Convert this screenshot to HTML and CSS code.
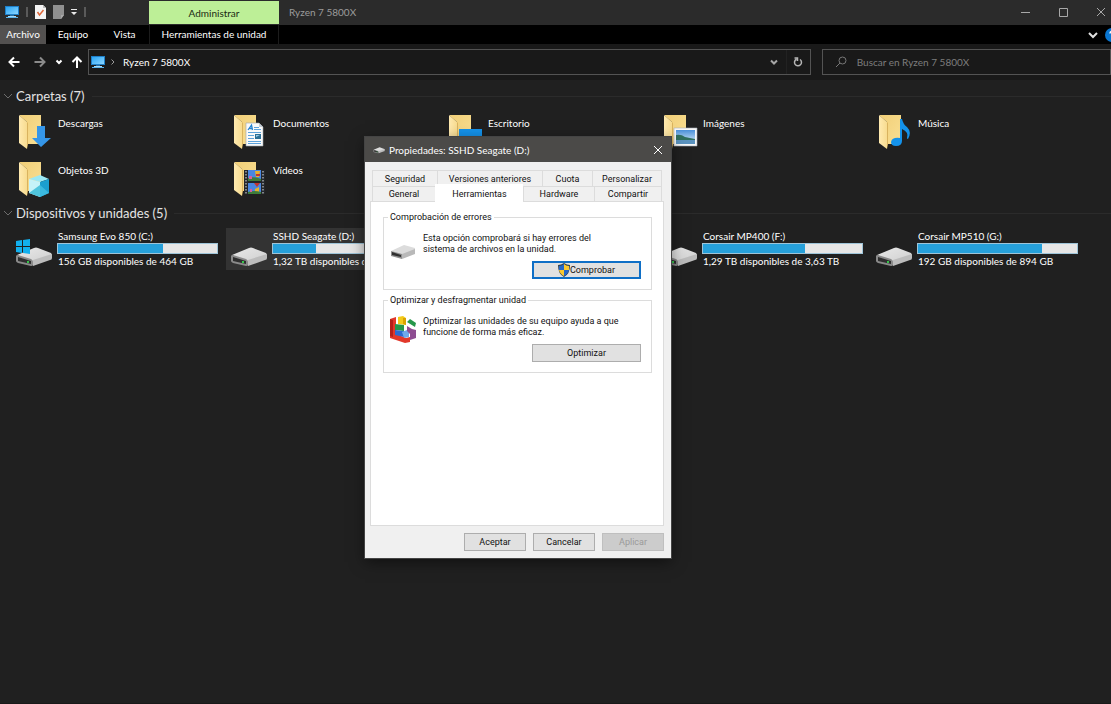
FILE: index.html
```html
<!DOCTYPE html>
<html lang="es">
<head>
    <meta charset="UTF-8">
    <meta name="viewport" content="width=device-width, initial-scale=1.0">
    <title>Ryzen 7 5800X</title>
    <link rel="stylesheet" href="styles.css">
</head>
<body>
    <!-- Shared icons -->
    <svg class="sprite" aria-hidden="true">
        <defs>
            <linearGradient id="gFolder" x1="0" y1="0" x2="1" y2="1">
                <stop offset="0" stop-color="#f1cf78"/>
                <stop offset="1" stop-color="#f9df93"/>
            </linearGradient>
            <linearGradient id="gFlap" x1="0" y1="0" x2="1" y2="0">
                <stop offset="0" stop-color="#ffeab0"/>
                <stop offset="1" stop-color="#f8dc90"/>
            </linearGradient>
            <linearGradient id="gScreen" x1="0" y1="0" x2="1" y2="1">
                <stop offset="0" stop-color="#2aa5f5"/>
                <stop offset="1" stop-color="#8ad5ff"/>
            </linearGradient>
            <linearGradient id="gTop" x1="0" y1="0" x2="1" y2="1">
                <stop offset="0" stop-color="#e9e9e9"/>
                <stop offset="1" stop-color="#cfcfcf"/>
            </linearGradient>
            <linearGradient id="gSky" x1="0" y1="0" x2="0" y2="1">
                <stop offset="0" stop-color="#4a90d9"/>
                <stop offset="1" stop-color="#e4f3fb"/>
            </linearGradient>
        </defs>
        <symbol id="pc" viewBox="0 0 14 14">
            <path fill="#1f7fc8" d="M0 1h14v9H0z"/>
            <path fill="url(#gScreen)" d="M1 2h12v7H1z"/>
            <path fill="#2a6d9e" d="M5 10h4v2H5z"/>
            <path fill="#5cb4ec" d="M1 12h12v1H1z"/>
            <path fill="#a5dcfa" d="M3 11h8v1H3z"/>
        </symbol>
        <symbol id="folder" viewBox="0 0 38 38">
            <path fill="url(#gFolder)" d="M5 1h21v29H12V8L5 2z"/>
            <path fill="#d9b35f" d="M12 9l1-1v22l-1 5z"/>
            <path fill="url(#gFlap)" d="M4 1l8 7v27l-8-6z"/>
        </symbol>
        <symbol id="drive" viewBox="0 0 38 22">
            <path fill="url(#gTop)" d="M2 10L19 3q2-1 4 0l13 5q1 1 1 3L18 17z"/>
            <path fill="#8a8a8a" d="M1 11q0-1 2-1l13 4q2 1 2 3v3q0 1-2 1L3 18q-2-1-2-2z"/>
            <path fill="#2f2f2f" d="M3 12l13 4v3L3 16z"/>
            <path fill="#bcbcbc" d="M18 15l19-6v4q0 2-2 2l-17 6z"/>
            <path fill="#35c64a" d="M12 16h2v2h-2z"/>
        </symbol>
    </svg>

    <div class="explorer">
        <header class="titlebar">
            <div class="quick">
                <svg class="ico14"><use href="#pc"/></svg>
                <span class="sep"></span>
                <svg class="ico-page" viewBox="0 0 11 14">
                    <path fill="#f4f4f4" d="M0 0h8l3 3v11H0z"/>
                    <path fill="#bdbdbd" d="M8 0l3 3H8z"/>
                    <path fill="none" stroke="#e0683a" stroke-width="1.500" d="M2.500 7l2 3 4-5"/>
                </svg>
                <svg class="ico-page" viewBox="0 0 11 14">
                    <path fill="#909090" d="M0 0h11v10l-3 4H0z"/>
                    <path fill="#a9a9a9" d="M8 14v-4h3z"/>
                </svg>
                <svg class="ico-drop" viewBox="0 0 6 7">
                    <path fill="#e8e8e8" d="M0 0h6v1H0zM0 3h6L3 6z"/>
                </svg>
                <span class="sep"></span>
            </div>
            <div class="context">Administrar</div>
            <h1 class="title">Ryzen 7 5800X</h1>
            <div class="controls">
                <button type="button" aria-label="Minimizar"><svg viewBox="0 0 10 10"><path d="M1 5.500h9"/></svg></button>
                <button type="button" aria-label="Maximizar"><svg viewBox="0 0 10 10"><path d="M1.500 1.500h8v8h-8z"/></svg></button>
                <button type="button" aria-label="Cerrar"><svg viewBox="0 0 10 10"><path d="M1 1l8 8M9 1l-8 8"/></svg></button>
            </div>
        </header>

        <nav class="ribbon">
            <a href="#" class="file">Archivo</a>
            <a href="#" class="home">Equipo</a>
            <a href="#" class="view">Vista</a>
            <a href="#" class="tools">Herramientas de unidad</a>
            <div class="ribbon-right">
                <button type="button" aria-label="Expandir la cinta"><svg class="ico-chev" viewBox="0 0 10 8"><path d="M1 2l4 4 4-4"/></svg></button>
                <button type="button" aria-label="Ayuda">
                    <svg class="ico14" viewBox="0 0 14 14">
                        <circle cx="7" cy="7" r="7" fill="#0a76d1"/>
                        <path fill="none" stroke="#fff" stroke-width="1.500" d="M5 5.500q0-2 2-2t2 2q0 1-2 2.500v1M7 10v1.500"/>
                    </svg>
                </button>
            </div>
        </nav>

        <div class="navbar">
            <div class="arrows">
                <button type="button" aria-label="Atrás"><svg viewBox="0 0 12 12"><path d="M11.500 6H1.500M6 1.500L1.500 6 6 10.500"/></svg></button>
                <button type="button" class="dim" aria-label="Adelante"><svg viewBox="0 0 12 12"><path d="M.5 6h10M6 1.500L10.500 6 6 10.500"/></svg></button>
                <button type="button" class="recent" aria-label="Ubicaciones recientes"><svg viewBox="0 0 12 12"><path d="M3.500 4.500L6 7l2.500-2.500"/></svg></button>
                <button type="button" class="up" aria-label="Subir"><svg viewBox="0 0 12 12"><path d="M6 12V1.500M1.500 6L6 1.500 10.500 6"/></svg></button>
            </div>
            <div class="address">
                <svg class="ico14"><use href="#pc"/></svg>
                <svg class="crumb" viewBox="0 0 6 8"><path d="M1.500 1.500L4 4 1.500 6.500"/></svg>
                <span class="path">Ryzen 7 5800X</span>
                <button type="button" aria-label="Ubicaciones anteriores"><svg class="ico-chev" viewBox="0 0 10 8"><path d="M2 2.500l3 3 3-3"/></svg></button>
                <button type="button" class="reload" aria-label="Actualizar"><svg viewBox="0 0 10 10"><path d="M3.500 2.200a3.500 3.500 0 1 0 3.500.3M1.500 1h3v3"/></svg></button>
            </div>
            <div class="search">
                <svg viewBox="0 0 12 12"><circle cx="7.500" cy="4.500" r="3.500"/><path d="M5 7L1 11"/></svg>
                <input type="text" aria-label="Buscar" placeholder="Buscar en Ryzen 7 5800X">
            </div>
        </div>

        <main class="content">
            <h2><svg viewBox="0 0 10 8"><path d="M1 2l4 4 4-4"/></svg>Carpetas (7)</h2>
            <ul class="tiles folders">
                <li>
                    <svg class="ico38" viewBox="0 0 38 38">
                        <use href="#folder"/>
                        <path fill="#3596e8" d="M22 12h8v12h6L26 33 17 24h5z"/>
                    </svg>
                    <span>Descargas</span>
                </li>
                <li>
                    <svg class="ico38" viewBox="0 0 38 38">
                        <use href="#folder"/>
                        <path fill="#fafafa" stroke="#9aa4ad" stroke-width=".6" d="M16 9h13l4 4v19H16z"/>
                        <path fill="#c3ccd4" d="M29 9l4 4h-4z"/>
                        <path fill="none" stroke="#2383cf" stroke-width="1.300" d="M18 16l3.500-5 1 5M19.500 14.500H22"/>
                        <path stroke="#5da3dc" d="M24 13.500h5M24 15.500h7M18 18.500h13M18 21.500h6M18 24.500h6M18 27.500h13M18 29.500h13"/>
                        <path fill="#2a6f96" d="M25 20h6v5h-6z"/>
                        <path fill="#9ccbe8" d="M26 21h4l-4 2z"/>
                    </svg>
                    <span>Documentos</span>
                </li>
                <li>
                    <svg class="ico38" viewBox="0 0 38 38">
                        <use href="#folder"/>
                        <path fill="#1492ea" d="M14 15h23v18H14z"/>
                    </svg>
                    <span>Escritorio</span>
                </li>
                <li>
                    <svg class="ico38" viewBox="0 0 38 38">
                        <use href="#folder"/>
                        <path fill="#f8f8f8" stroke="#a8b0b8" stroke-width=".6" d="M14 14h23v18H14z"/>
                        <path fill="url(#gSky)" d="M16 16h19v14H16z"/>
                        <path fill="#2f6f5f" d="M16 21q5-1 9 2l10 2v2H16z"/>
                        <path fill="#5b93bf" d="M16 26h19v4H16z"/>
                    </svg>
                    <span>Imágenes</span>
                </li>
                <li>
                    <svg class="ico38" viewBox="0 0 38 38">
                        <use href="#folder"/>
                        <path fill="#1492ea" d="M25 5h2q1 5 5 8 5 5 1 12-1 0-1-1 2-6-5-9v12q0 5-6 5-5 0-5-4 1-5 9-4z"/>
                    </svg>
                    <span>Música</span>
                </li>
                <li>
                    <svg class="ico38" viewBox="0 0 38 38">
                        <use href="#folder"/>
                        <path fill="#9be8f4" d="M14 18l11-4 9 4-9 3z"/>
                        <path fill="#c5f3f8" d="M14 18l11 3v15l-11-4z"/>
                        <path fill="#1b9fd0" d="M25 21l9-3v14l-9 4z"/>
                        <path fill="#4fc5dd" d="M14 32l11-8v12z"/>
                        <path fill="#3bb9df" d="M25 24l9 8-9 4z"/>
                    </svg>
                    <span>Objetos 3D</span>
                </li>
                <li>
                    <svg class="ico38" viewBox="0 0 38 38">
                        <use href="#folder"/>
                        <path fill="#23262b" d="M14 9h21v24H14z"/>
                        <path fill="#4a86e0" d="M18 9h13v11H18zM18 22h13v11H18z"/>
                        <path stroke="#a4a7ab" stroke-width="1.500" stroke-dasharray="1.500 1.500" d="M16 10v23M33 10v23"/>
                        <path fill="#e8b22b" d="M25 10h5l-1 6h-3zM25 28l4-2v5h-4z"/>
                        <path fill="#c2372e" d="M26 13h4v2h-4zM24 22h6l-3 4z"/>
                        <path fill="#3f7d3a" d="M18 17q6-2 13 1v2H18zM18 31q6-2 13 0v2H18z"/>
                        <path fill="#d45fa0" d="M19 15h3v3h-3zM20 28h2v3h-2z"/>
                    </svg>
                    <span>Vídeos</span>
                </li>
            </ul>

            <h2><svg viewBox="0 0 10 8"><path d="M1 2l4 4 4-4"/></svg>Dispositivos y unidades (5)</h2>
            <ul class="tiles drives">
                <li>
                    <svg class="ico38" viewBox="0 0 38 38">
                        <use href="#drive" y="15" width="38" height="22"/>
                        <path fill="#12b0ee" d="M1 11l6-1v6H1zM8 10l7-1v7H8zM1 17h6v6l-6-1zM8 17h7v7l-7-1z"/>
                    </svg>
                    <div class="info">
                        <span>Samsung Evo 850 (C:)</span>
                        <div class="bar"><div class="fill" style="width: 66%"></div></div>
                        <span>156 GB disponibles de 464 GB</span>
                    </div>
                </li>
                <li class="selected">
                    <svg class="ico38" viewBox="0 0 38 38"><use href="#drive" y="15" width="38" height="22"/></svg>
                    <div class="info">
                        <span>SSHD Seagate (D:)</span>
                        <div class="bar"><div class="fill" style="width: 27%"></div></div>
                        <span>1,32 TB disponibles de</span>
                    </div>
                </li>
                <li></li>
                <li>
                    <svg class="ico38" viewBox="0 0 38 38"><use href="#drive" y="15" width="38" height="22"/></svg>
                    <div class="info">
                        <span>Corsair MP400 (F:)</span>
                        <div class="bar"><div class="fill" style="width: 64%"></div></div>
                        <span>1,29 TB disponibles de 3,63 TB</span>
                    </div>
                </li>
                <li>
                    <svg class="ico38" viewBox="0 0 38 38"><use href="#drive" y="15" width="38" height="22"/></svg>
                    <div class="info">
                        <span>Corsair MP510 (G:)</span>
                        <div class="bar"><div class="fill" style="width: 78%"></div></div>
                        <span>192 GB disponibles de 894 GB</span>
                    </div>
                </li>
            </ul>
        </main>
    </div>

    <!-- Properties window -->
    <section class="dialog" role="dialog" aria-labelledby="dialogTitle">
        <header class="dialog-bar">
            <svg class="ico-mini"><use href="#drive"/></svg>
            <h2 id="dialogTitle">Propiedades: SSHD Seagate (D:)</h2>
            <button type="button" aria-label="Cerrar"><svg viewBox="0 0 10 10"><path d="M1 1l8 8M9 1l-8 8"/></svg></button>
        </header>
        <div class="dialog-body">
            <div class="tabs back">
                <button type="button">Seguridad</button>
                <button type="button">Versiones anteriores</button>
                <button type="button">Cuota</button>
                <button type="button">Personalizar</button>
            </div>
            <div class="tabs front">
                <button type="button">General</button>
                <button type="button" class="active">Herramientas</button>
                <button type="button">Hardware</button>
                <button type="button">Compartir</button>
            </div>
            <div class="panel">
                <fieldset>
                    <legend>Comprobación de errores</legend>
                    <div class="row">
                        <svg class="ico-tool" viewBox="0 0 28 28">
                            <path fill="#dcdcdc" d="M2 18l13-6 11 3v2l-13 5z"/>
                            <path fill="#8f8f8f" d="M2 18l11 3v5L2 23z"/>
                            <path fill="#2f2f2f" d="M3 19l9 3v2l-9-2z"/>
                            <path fill="#b9b9b9" d="M13 21l13-5v5l-13 5z"/>
                        </svg>
                        <p>Esta opción comprobará si hay errores del<br>sistema de archivos en la unidad.</p>
                    </div>
                    <button type="button" class="btn wide default">
                        <svg viewBox="0 0 12 14">
                            <path fill="#33424d" d="M6 0q3 2 6 2 0 9-6 12Q0 11 0 2q3 0 6-2z"/>
                            <path fill="#2467c9" d="M6 1v6H1V3q3 0 5-2zM6 7h5q-1 4-5 6z"/>
                            <path fill="#fbc92f" d="M6 1q2 2 5 2v4H6zM1 7h5v6Q2 11 1 7z"/>
                        </svg>Comprobar
                    </button>
                </fieldset>
                <fieldset>
                    <legend>Optimizar y desfragmentar unidad</legend>
                    <div class="row">
                        <svg class="ico-tool" viewBox="0 0 28 28">
                            <path fill="#e2382a" d="M1 3l6-2v17l10 4 4-1v5l-5 1L1 22z"/>
                            <path fill="#b3201a" d="M1 3l3 1v17l-3-1z"/>
                            <path fill="#f3ca1c" d="M9 1l5-1 3 2v7l-8-1z"/>
                            <path fill="#d9a400" d="M14 2l3 0v7l-3-1z"/>
                            <path fill="#25974a" d="M6 8l9 1v6l-9-1zM18 6l3-3 6 4-1 4z"/>
                            <path fill="#2c6ad0" d="M6 14l9 1v6l-9-2z"/>
                            <path fill="#6fa9ea" d="M13 16l5-2 2 2v5l-5 1z"/>
                            <path fill="#8e4d92" d="M18 10l5 3 4 1v8l-6 2v-6l-3-3z"/>
                        </svg>
                        <p>Optimizar las unidades de su equipo ayuda a que<br>funcione de forma más eficaz.</p>
                    </div>
                    <button type="button" class="btn wide">Optimizar</button>
                </fieldset>
            </div>
            <footer class="actions">
                <button type="button" class="btn">Aceptar</button>
                <button type="button" class="btn">Cancelar</button>
                <button type="button" class="btn" disabled>Aplicar</button>
            </footer>
        </div>
    </section>
</body>
</html>
```

FILE: styles.css
```css
* {
    box-sizing: border-box;
}
body {
    margin: 0;
    font-family: Lato, "Open Sans", sans-serif;
    font-size: 10px;
    line-height: 14px;
    color: #fff;
    background-color: #202020;
    overflow: hidden;
}
h1, h2, p, ul, fieldset {
    margin: 0;
    padding: 0;
    font-size: inherit;
    font-weight: normal;
}
button {
    display: flex;
    align-items: center;
    justify-content: center;
    margin: 0;
    padding: 0;
    border: none;
    background: none;
    color: inherit;
    font: inherit;
}
a {
    color: inherit;
    text-decoration: none;
}
svg {
    display: block;
    flex: none;
}
.sprite {
    position: absolute;
    width: 0;
    height: 0;
}
.explorer {
    min-height: 100vh;
    border-bottom: 1px solid #191919;
}
.ico14 {
    width: 14px;
    height: 14px;
}
.ico38 {
    width: 38px;
    height: 38px;
}

/* Title bar */
.titlebar {
    display: flex;
    height: 25px;
    padding-bottom: 1px;
    background: #2b2b2b;
    overflow: hidden;
}
.quick {
    display: flex;
    align-items: center;
    gap: 7px;
    width: 149px;
    padding-left: 5px;
}
.sep {
    width: 2px;
    height: 10px;
    background: #5a5a5a;
}
.ico-page {
    width: 11px;
    height: 14px;
}
.ico-drop {
    width: 6px;
    height: 7px;
}
.context {
    width: 130px;
    margin-top: 1px;
    line-height: 24px;
    text-align: center;
    color: #1b2a12;
    background: #bdef97;
}
.title {
    flex: 1;
    padding-left: 10px;
    line-height: 24px;
    color: #9b9b9b;
}
.controls {
    display: flex;
    margin-right: -9px;
}
.controls button {
    width: 38px;
}
.controls svg {
    width: 10px;
    height: 10px;
    fill: none;
    stroke: #a8a8a8;
}

/* Ribbon tabs */
.ribbon {
    display: flex;
    height: 19px;
    line-height: 19px;
    background: #000;
    overflow: hidden;
    text-align: center;
}
.file {
    width: 46px;
    background: #535150;
}
.home {
    width: 54px;
}
.view {
    width: 49px;
}
.tools {
    width: 130px;
    border-left: 1px solid #1c1c1c;
    border-right: 1px solid #1c1c1c;
}
.ribbon-right {
    display: flex;
    align-items: center;
    gap: 7px;
    margin-left: auto;
    margin-right: -8px;
}
.ico-chev {
    width: 10px;
    height: 8px;
    fill: none;
    stroke: #e0e0e0;
    stroke-width: 2;
}

/* Address row */
.navbar {
    display: grid;
    grid-template-columns: 88px 5fr 2fr;
    height: 36px;
    padding-top: 5px;
    background: #191919;
}
.arrows {
    display: flex;
    height: 26px;
    padding-left: 8px;
}
.arrows button {
    width: 12px;
    margin-right: 14px;
}
.arrows .dim {
    margin-right: 7px;
}
.arrows .recent {
    margin-right: 6px;
}
.arrows .up {
    margin-right: 0;
}
.arrows svg {
    width: 12px;
    height: 12px;
    fill: none;
    stroke: #fff;
    stroke-width: 2;
}
.arrows .dim svg {
    stroke: #8b8b8b;
}
.address {
    display: flex;
    align-items: center;
    height: 26px;
    margin-right: 8px;
    padding-left: 2px;
    border: 1px solid #535353;
}
.crumb {
    width: 6px;
    height: 8px;
    margin: 0 7px 0 5px;
    fill: none;
    stroke: #9a9a9a;
}
.path {
    flex: 1;
}
.address button {
    width: 24px;
    height: 24px;
}
.address .ico-chev {
    stroke: #a6a6a6;
}
.address .reload {
    border-left: 1px solid #222;
}
.reload svg {
    width: 10px;
    height: 10px;
    fill: none;
    stroke: #b5b5b5;
    stroke-width: 1.5;
}
.search {
    display: flex;
    align-items: center;
    gap: 10px;
    height: 26px;
    margin-left: 3px;
    padding-left: 12px;
    border: 1px solid #535353;
}
.search svg {
    width: 12px;
    height: 12px;
    fill: none;
    stroke: #777;
}
.search input {
    flex: 1;
    min-width: 0;
    padding: 0;
    border: none;
    outline: none;
    background: none;
    color: #fff;
    font: inherit;
}
.search input::placeholder {
    color: #7d7d7d;
}

/* Folders and drives */
.content {
    padding-top: 1px;
}
.content h2 {
    display: flex;
    align-items: center;
    height: 30px;
    padding-left: 3px;
    font-size: 13px;
    color: #e4e4e4;
}
.content h2 svg {
    width: 10px;
    height: 8px;
    margin-right: 3px;
    fill: none;
    stroke: #6d6d6d;
}
.content h2::after {
    content: "";
    flex: 1;
    height: 1px;
    margin-left: 7px;
    background: #2b2b2b;
}
.tiles {
    display: grid;
    grid-template-columns: repeat(auto-fill, 215px);
    padding-left: 11px;
    list-style: none;
}
.tiles li {
    display: flex;
}
.folders {
    row-gap: 7px;
}
.folders li {
    gap: 5px;
    height: 40px;
    padding: 3px 0 0 4px;
}
.folders span {
    padding-top: 2px;
}
.drives li {
    gap: 4px;
    height: 42px;
    padding: 1px 0 0 4px;
}
.drives svg {
    margin-top: 1px;
}
.drives .selected {
    background: #333;
}
.info {
    width: 161px;
    white-space: nowrap;
}
.info span {
    display: block;
    margin-left: 1px;
}
.bar {
    height: 11px;
    border: 1px solid #9ec4d8;
    background: #e6e6e6;
}
.fill {
    height: 100%;
    background: #26a0da;
}

/* Properties window */
.dialog {
    position: absolute;
    top: 137px;
    left: 365px;
    width: 306px;
    font-family: Roboto, "Liberation Sans", sans-serif;
    font-size: 9px;
    line-height: 12px;
    color: #111;
    background: #f0f0f0;
    box-shadow: 0 0 0 1px #444, 0 4px 14px rgba(0, 0, 0, 0.5);
}
.dialog-bar {
    display: flex;
    align-items: center;
    height: 25px;
    padding-left: 8px;
    color: #fff;
    background: #4b4a48;
    font-family: Lato, "Open Sans", sans-serif;
    font-size: 10px;
}
.dialog-bar h2 {
    flex: 1;
    padding-left: 4px;
}
.dialog-bar button {
    width: 26px;
    height: 25px;
}
.dialog-bar button svg {
    width: 10px;
    height: 10px;
    fill: none;
    stroke: #fff;
}
.ico-mini {
    width: 12px;
    height: 8px;
}
.dialog-body {
    padding: 8px 7px 7px 5px;
}
.tabs {
    display: grid;
    margin: 0 2px;
}
.tabs.back {
    grid-template-columns: 65fr 105fr 50fr 70fr;
}
.tabs.front {
    grid-template-columns: 63fr 88fr 71fr 68fr;
}
.tabs button {
    height: 16px;
    border: 1px solid #dcdcdc;
    border-width: 1px 0 0 1px;
    white-space: nowrap;
}
.tabs.front button {
    height: 15px;
}
.tabs button:last-child {
    border-right-width: 1px;
}
.tabs.front .active {
    height: 18px;
    margin: -2px 0 -1px;
    background: #fff;
    border-color: #fff;
    z-index: 1;
}
.panel {
    display: flex;
    flex-direction: column;
    gap: 4px;
    min-height: 325px;
    padding: 9px 11px 8px 12px;
    background: #fff;
    border: 1px solid #dcdcdc;
}
fieldset {
    min-width: 0;
    padding: 10px 10px 10px 5px;
    border: 1px solid #dcdcdc;
}
legend {
    margin-left: -1px;
    padding: 0 2px;
}
.row {
    display: flex;
    gap: 6px;
    height: 22px;
    margin-bottom: 6px;
    line-height: 11px;
    white-space: nowrap;
}
.ico-tool {
    width: 28px;
    height: 28px;
}
.btn {
    width: 62px;
    height: 18px;
    border: 1px solid #adadad;
    background: #e1e1e1;
}
.btn.wide {
    width: 109px;
    margin-left: auto;
}
.btn.default {
    border: 2px solid #0f6fc6;
}
.btn svg {
    width: 12px;
    height: 14px;
}
.btn:disabled {
    color: #9a9a9a;
    border-color: #bfbfbf;
    background: #ccc;
}
.actions {
    display: flex;
    justify-content: flex-end;
    gap: 7px;
    padding-top: 7px;
}
```
